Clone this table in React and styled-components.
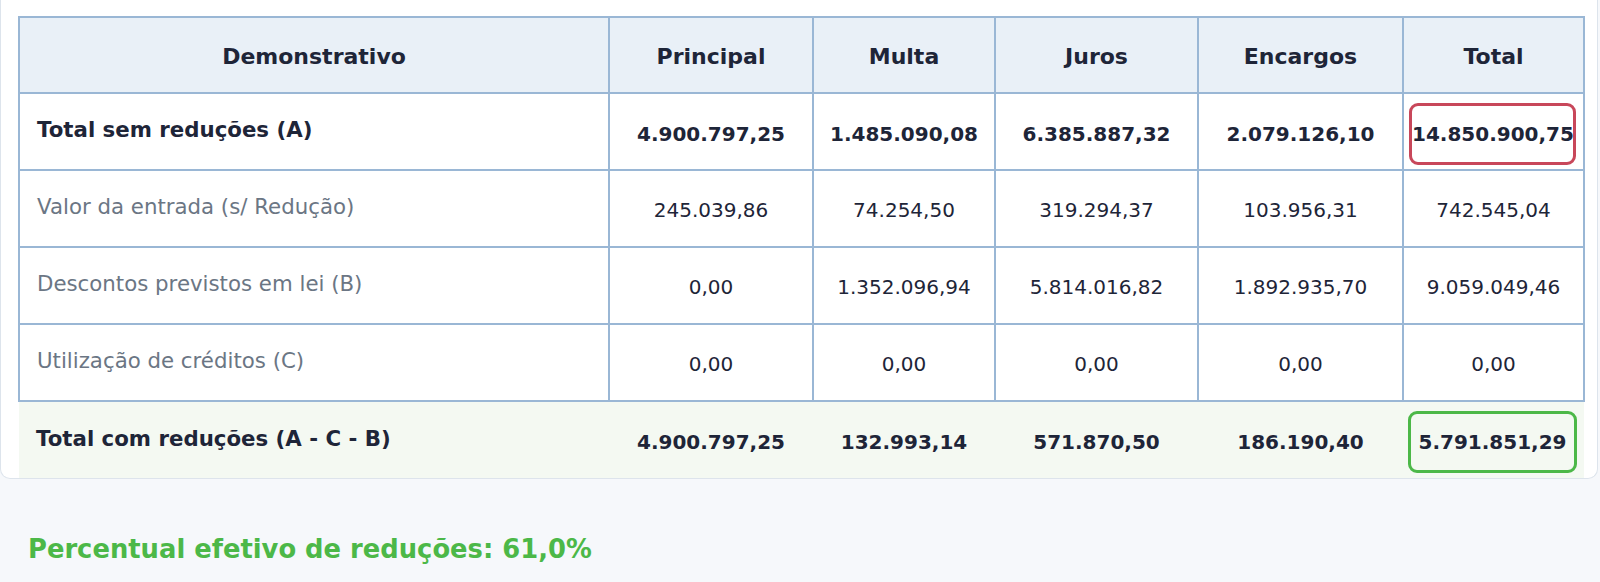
import styled, { createGlobalStyle } from "styled-components";

const GlobalStyle = createGlobalStyle`
  body {
    margin: 0;
    background: #f6f8fb;
    font-family: "DejaVu Sans", "Liberation Sans", sans-serif;
    color: #1e2538;
  }
`;

const columns = [
  { key: "principal", title: "Principal", width: 204 },
  { key: "multa", title: "Multa", width: 182 },
  { key: "juros", title: "Juros", width: 203 },
  { key: "encargos", title: "Encargos", width: 205 },
  { key: "total", title: "Total", width: 181 },
];

const rows = [
  {
    label: "Total sem reduções (A)",
    strong: true,
    values: ["4.900.797,25", "1.485.090,08", "6.385.887,32", "2.079.126,10", "14.850.900,75"],
    highlight: "red",
  },
  {
    label: "Valor da entrada (s/ Redução)",
    values: ["245.039,86", "74.254,50", "319.294,37", "103.956,31", "742.545,04"],
  },
  {
    label: "Descontos previstos em lei (B)",
    values: ["0,00", "1.352.096,94", "5.814.016,82", "1.892.935,70", "9.059.049,46"],
  },
  {
    label: "Utilização de créditos (C)",
    values: ["0,00", "0,00", "0,00", "0,00", "0,00"],
  },
];

const totalRow = {
  label: "Total com reduções (A - C - B)",
  values: ["4.900.797,25", "132.993,14", "571.870,50", "186.190,40", "5.791.851,29"],
};

const highlightColors = {
  red: "#c8475a",
  green: "#4cb848",
};

const Card = styled.div`
  background: #ffffff;
  border: 1px solid #dde4ec;
  border-top: none;
  border-radius: 0 0 10px 10px;
  margin-right: 2px;
  padding: 16px 14px 0 17px;
`;

const Table = styled.table`
  width: 100%;
  border-collapse: collapse;
  table-layout: fixed;
`;

const HeadCell = styled.th`
  height: 72px;
  padding: 2px 8px 0;
  background: #e9f0f7;
  border: 2px solid #9ab7d5;
  font-size: 22px;
  font-weight: bold;
  color: #1e2538;
  text-align: center;
`;

const BodyRow = styled.tr`
  height: 77px;
`;

const LabelCell = styled.td`
  border: 2px solid #9ab7d5;
  padding: 0 0 4px 17px;
  font-size: 21.3px;
  font-weight: ${(p) => (p.$strong ? "bold" : "normal")};
  color: ${(p) => (p.$strong ? "#1e2538" : "#6b7684")};
  text-align: left;
  white-space: nowrap;
`;

const ValueCell = styled.td`
  border: 2px solid #9ab7d5;
  padding: ${(p) => (p.$strong ? "4px 0 0" : "2px 0 0")};
  font-size: 20px;
  font-weight: ${(p) => (p.$strong ? "bold" : "normal")};
  color: #1e2538;
  text-align: center;
  white-space: nowrap;
`;

const FootRow = styled.tr`
  height: 77px;
  background: #f4f9f2;

  td {
    border: none;
  }
`;

const Highlight = styled.span`
  display: block;
  margin: 0 7px 0 5px;
  padding: 16px 0;
  line-height: 24px;
  border: 3px solid ${(p) => highlightColors[p.$tone]};
  border-radius: 9px;
  font-weight: bold;
`;

const Summary = styled.p`
  margin: 55px 0 0;
  padding: 0 28px;
  font-size: 25.8px;
  line-height: 30px;
  font-weight: bold;
  color: #4cb848;
`;

const renderValue = (value, index, tone) =>
  index === columns.length - 1 && tone ? (
    <Highlight $tone={tone}>{value}</Highlight>
  ) : (
    value
  );

export default function App() {
  return (
    <>
      <GlobalStyle />
      <Card>
        <Table>
          <colgroup>
            <col style={{ width: 590 }} />
            {columns.map((c) => (
              <col key={c.key} style={{ width: c.width }} />
            ))}
          </colgroup>
          <thead>
            <tr>
              <HeadCell>Demonstrativo</HeadCell>
              {columns.map((c) => (
                <HeadCell key={c.key}>{c.title}</HeadCell>
              ))}
            </tr>
          </thead>
          <tbody>
            {rows.map((row) => (
              <BodyRow key={row.label}>
                <LabelCell $strong={row.strong}>{row.label}</LabelCell>
                {row.values.map((v, i) => (
                  <ValueCell key={columns[i].key} $strong={row.strong}>
                    {renderValue(v, i, row.highlight)}
                  </ValueCell>
                ))}
              </BodyRow>
            ))}
          </tbody>
          <tfoot>
            <FootRow>
              <LabelCell $strong>{totalRow.label}</LabelCell>
              {totalRow.values.map((v, i) => (
                <ValueCell key={columns[i].key} $strong>
                  {renderValue(v, i, "green")}
                </ValueCell>
              ))}
            </FootRow>
          </tfoot>
        </Table>
      </Card>
      <Summary>Percentual efetivo de reduções: 61,0%</Summary>
    </>
  );
}
